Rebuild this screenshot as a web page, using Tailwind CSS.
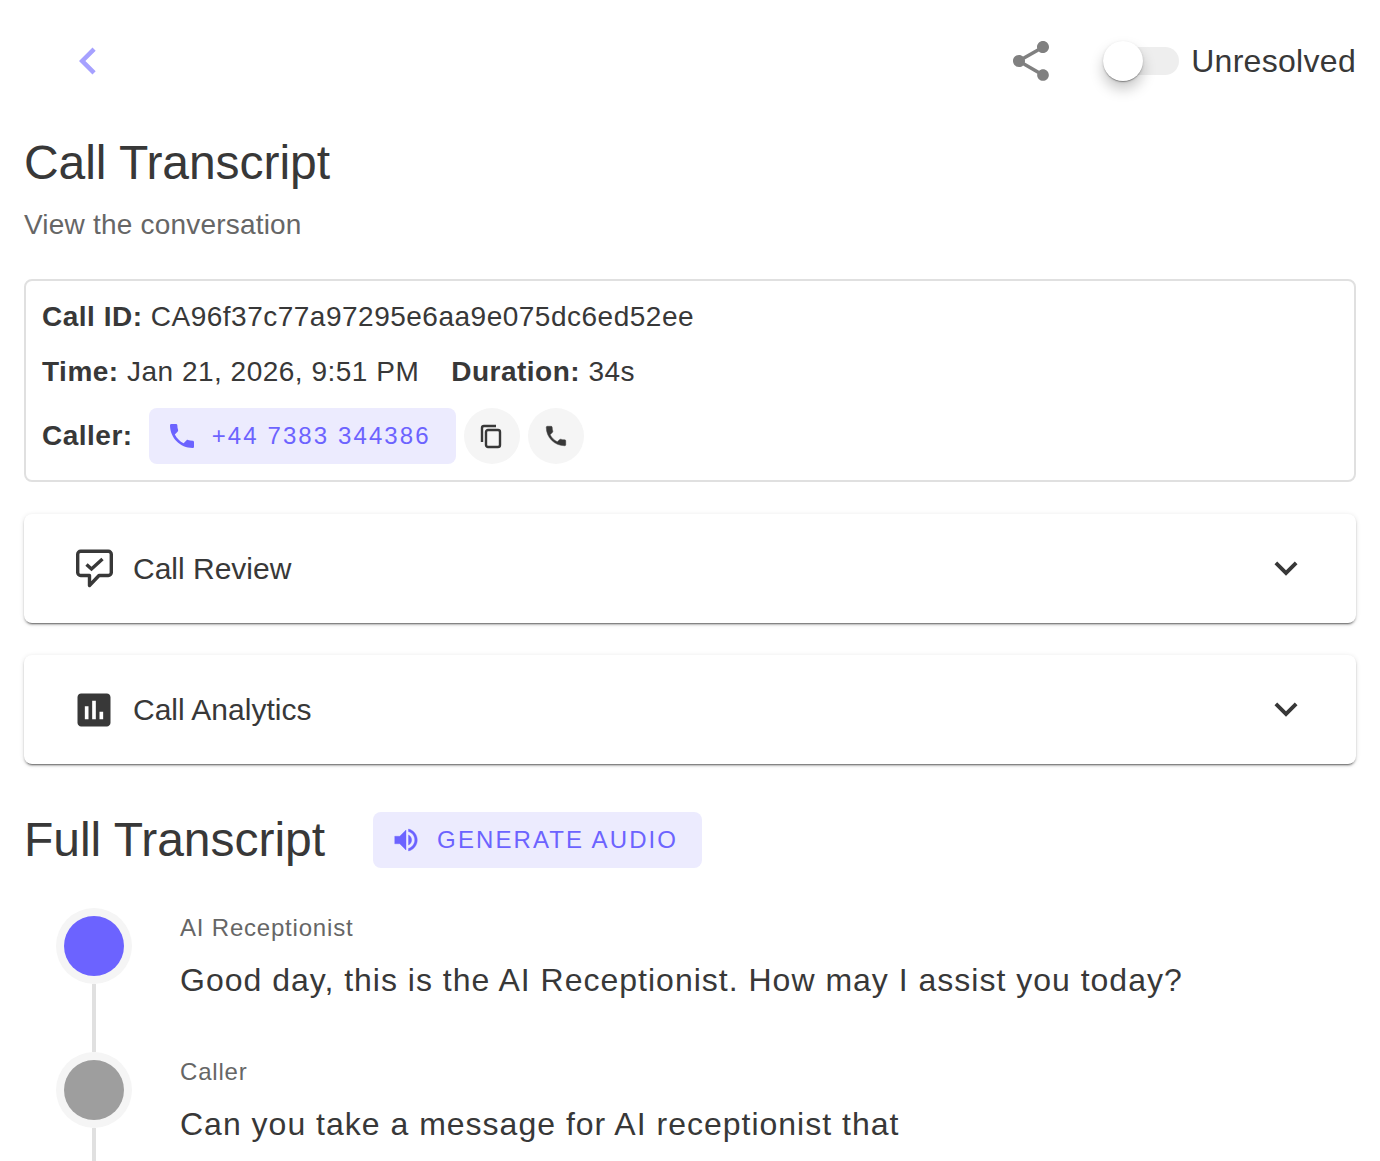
<!DOCTYPE html>
<html lang="en">
<head>
  <meta charset="UTF-8" />
  <meta name="viewport" content="width=device-width, initial-scale=1.0" />
  <title>Call Transcript</title>
  <script src="https://cdn.jsdelivr.net/npm/@tailwindcss/browser@4"></script>
</head>
<body class="bg-white text-[#383838] font-['Liberation_Sans',Arial,sans-serif] h-screen overflow-hidden">
  <div class="px-6">
    <!-- top bar -->
    <header class="h-[106px] pt-4 flex items-center">
      <button class="ml-[37px] w-[54px] h-[54px] text-[#a6a1ff]">
        <svg viewBox="0 0 24 24" class="w-[54px] h-[54px]" fill="currentColor"><path d="M15.41 7.41 14 6l-6 6 6 6 1.41-1.41L10.83 12z"/></svg>
      </button>
      <div class="ml-auto flex items-center">
        <svg viewBox="0 0 24 24" class="w-12 h-12 text-[#808080]" fill="currentColor"><path d="M18 16.08c-.76 0-1.44.3-1.96.77L8.91 12.7c.05-.23.09-.46.09-.7s-.04-.47-.09-.7l7.05-4.11c.54.5 1.25.81 2.04.81 1.66 0 3-1.34 3-3s-1.34-3-3-3-3 1.34-3 3c0 .24.04.47.09.7L8.04 9.81C7.5 9.31 6.79 9 6 9c-1.66 0-3 1.34-3 3s1.34 3 3 3c.79 0 1.5-.31 2.04-.81l7.12 4.16c-.05.21-.08.43-.08.65 0 1.61 1.31 2.92 2.92 2.92s2.92-1.31 2.92-2.92-1.31-2.92-2.92-2.92z"/></svg>
        <div class="relative ml-[48px] w-[76px] h-7 rounded-full bg-[#eeeeee]">
          <span class="absolute left-0 -top-[6px] w-10 h-10 rounded-full bg-white shadow-[0_2px_1px_-1px_rgba(0,0,0,0.2),0_1px_1px_0_rgba(0,0,0,0.14),0_1px_3px_0_rgba(0,0,0,0.12),0_8px_14px_rgba(0,0,0,0.22)]"></span>
        </div>
        <span class="ml-3 text-[32px] leading-10 tracking-[0.3px]">Unresolved</span>
      </div>
    </header>

    <h1 class="mt-[29px] text-[48px] leading-[56px] tracking-[-0.05px]">Call Transcript</h1>
    <p class="mt-4 text-[28px] leading-9 text-[#666666] tracking-[0.2px]">View the conversation</p>

    <!-- call details -->
    <section class="mt-9 h-[203px] border-2 border-[#e0e0e0] rounded-lg px-4 pt-[18px] text-[28px] tracking-[0.5px]">
      <div class="h-9 leading-9"><b>Call ID:</b> CA96f37c77a97295e6aa9e075dc6ed52ee</div>
      <div class="mt-[19px] h-9 leading-9 flex">
        <span><b>Time:</b> Jan 21, 2026, 9:51 PM</span>
        <span class="ml-8"><b>Duration:</b> 34s</span>
      </div>
      <div class="mt-[18px] flex items-center h-14">
        <b>Caller:</b>
        <div class="ml-4 w-[307px] h-14 rounded-lg bg-[#ecebfe] text-[#6c63ff] flex items-center pl-[17px] text-[24px] tracking-[2.1px]">
          <svg viewBox="0 0 24 24" class="w-8 h-8 shrink-0" fill="currentColor"><path d="M6.62 10.79c1.44 2.83 3.76 5.14 6.59 6.59l2.2-2.2c.27-.27.67-.36 1.02-.24 1.12.37 2.33.57 3.57.57.55 0 1 .45 1 1V20c0 .55-.45 1-1 1-9.39 0-17-7.61-17-17 0-.55.45-1 1-1h3.5c.55 0 1 .45 1 1 0 1.25.2 2.45.57 3.57.11.35.03.74-.25 1.02l-2.2 2.2z"/></svg>
          <span class="ml-[14px]">+44 7383 344386</span>
        </div>
        <button class="ml-2 w-14 h-14 rounded-full bg-[#f5f5f5] flex items-center justify-center">
          <svg viewBox="0 0 20 23" class="w-5 h-[23px] mr-[2px] overflow-visible" fill="none" stroke="currentColor" stroke-width="2.4"><rect x="5" y="5" width="14" height="17" rx="2"/><path d="M1 17V3a2 2 0 0 1 2-2h12"/></svg>
        </button>
        <button class="ml-2 w-14 h-14 rounded-full bg-[#f5f5f5] flex items-center justify-center">
          <svg viewBox="0 0 24 24" class="w-[26px] h-[26px]" fill="currentColor" stroke="currentColor" stroke-width="0.4"><path d="M6.62 10.79c1.44 2.83 3.76 5.14 6.59 6.59l2.2-2.2c.27-.27.67-.36 1.02-.24 1.12.37 2.33.57 3.57.57.55 0 1 .45 1 1V20c0 .55-.45 1-1 1-9.39 0-17-7.61-17-17 0-.55.45-1 1-1h3.5c.55 0 1 .45 1 1 0 1.25.2 2.45.57 3.57.11.35.03.74-.25 1.02l-2.2 2.2z"/></svg>
        </button>
      </div>
    </section>

    <!-- accordions -->
    <div class="mt-8 h-[109px] rounded-lg bg-white flex items-center pl-[50px] pr-[47px] shadow-[0_3px_1px_-2px_rgba(0,0,0,0.35),0_2px_2px_0_rgba(0,0,0,0.2),0_1px_5px_0_rgba(0,0,0,0.12)]">
      <svg viewBox="0 0 40 40" class="w-10 h-10 shrink-0" fill="none" stroke="currentColor" stroke-width="3.4" stroke-linejoin="round" stroke-linecap="round"><path d="M6.7 2.2H34.300a3 3 0 0 1 3 3V23.500a3 3 0 0 1-3 3H25L15.500 36.500V26.500H6.700a3 3 0 0 1-3-3V5.200a3 3 0 0 1 3-3z"/><path d="M12.500 15.500l5 4.500 11-10" stroke-linecap="butt" stroke-linejoin="miter"/></svg>
      <span class="ml-[19px] text-[30px] leading-9">Call Review</span>
      <svg viewBox="0 0 24 24" class="ml-auto mb-[2px] w-[46px] h-[46px]" fill="currentColor"><path d="M16.59 8.59 12 13.17 7.41 8.59 6 10l6 6 6-6z"/></svg>
    </div>
    <div class="mt-8 h-[109px] rounded-lg bg-white flex items-center pl-[48px] pr-[47px] shadow-[0_3px_1px_-2px_rgba(0,0,0,0.35),0_2px_2px_0_rgba(0,0,0,0.2),0_1px_5px_0_rgba(0,0,0,0.12)]">
      <svg viewBox="0 0 24 24" class="w-11 h-11 shrink-0" fill="currentColor"><path d="M19 3H5c-1.100 0-2 .9-2 2v14c0 1.100.9 2 2 2h14c1.100 0 2-.9 2-2V5c0-1.100-.9-2-2-2zM9 17H7v-7h2v7zm4 0h-2V7h2v10zm4 0h-2v-4h2v4z"/></svg>
      <span class="ml-[17px] text-[30px] leading-9">Call Analytics</span>
      <svg viewBox="0 0 24 24" class="ml-auto mb-[2px] w-[46px] h-[46px]" fill="currentColor"><path d="M16.59 8.59 12 13.17 7.41 8.59 6 10l6 6 6-6z"/></svg>
    </div>

    <!-- transcript -->
    <div class="mt-12 flex items-center h-14">
      <h2 class="text-[48px] leading-[56px] tracking-[-0.02px]">Full Transcript</h2>
      <button class="ml-12 w-[329px] h-14 rounded-lg bg-[#ecebfe] text-[#6c63ff] flex items-center pl-[18px] text-[24px] tracking-[2.1px]">
        <svg viewBox="0 0 24 24" class="w-[30px] h-[30px] shrink-0" fill="currentColor" stroke="currentColor" stroke-width="0.3"><path d="M3 9v6h4l5 5V4L7 9H3zm13.500 3c0-1.770-1.020-3.290-2.500-4.030v8.050c1.480-.73 2.500-2.250 2.500-4.020zM14 3.230v2.060c2.890.86 5 3.540 5 6.710s-2.110 5.850-5 6.710v2.060c4.010-.91 7-4.490 7-8.770s-2.990-7.860-7-8.770z"/></svg>
        <span class="ml-[16px]">GENERATE AUDIO</span>
      </button>
    </div>

    <div class="mt-10">
      <div class="flex h-[144px]">
        <div class="ml-8 w-[76px] flex flex-col items-center">
          <span class="w-[76px] h-[76px] shrink-0 rounded-full bg-[#f5f5f5] flex items-center justify-center"><span class="w-[60px] h-[60px] rounded-full bg-[#6c63ff]"></span></span>
          <span class="w-1 flex-1 bg-[#e0e0e0]"></span>
        </div>
        <div class="ml-12 pt-1">
          <p class="text-[24px] leading-8 text-[#666666] tracking-[0.8px]">AI Receptionist</p>
          <p class="mt-[16px] text-[32px] leading-10 tracking-[1px]">Good day, this is the AI Receptionist. How may I assist you today?</p>
        </div>
      </div>
      <div class="flex h-[144px]">
        <div class="ml-8 w-[76px] flex flex-col items-center">
          <span class="w-[76px] h-[76px] shrink-0 rounded-full bg-[#f5f5f5] flex items-center justify-center"><span class="w-[60px] h-[60px] rounded-full bg-[#9e9e9e]"></span></span>
          <span class="w-1 flex-1 bg-[#e0e0e0]"></span>
        </div>
        <div class="ml-12 pt-1">
          <p class="text-[24px] leading-8 text-[#666666] tracking-[0.8px]">Caller</p>
          <p class="mt-[16px] text-[32px] leading-10 tracking-[1px]">Can you take a message for AI receptionist that</p>
        </div>
      </div>
    </div>
  </div>
</body>
</html>
